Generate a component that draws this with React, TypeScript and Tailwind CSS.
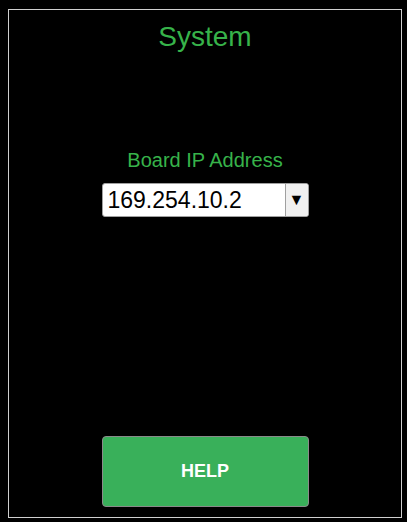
export default function App() {
  return (
    <div className="min-h-[522px] w-[407px] bg-black pt-[9px] pl-[8px]" style={{ fontFamily: '"Liberation Sans", Arial, sans-serif' }}>
      <div className="flex h-[509px] w-[394px] flex-col items-center border border-[#d0d0d0] pt-[11px]">
        <h1 className="text-[28px] leading-[32px] text-[#37b34a]">System</h1>

        <div className="mt-[96px] text-[20px] leading-[23px] text-[#37b34a]">Board IP Address</div>

        <div className="mt-[11px] flex h-[34px] w-[207px] items-stretch overflow-hidden rounded-[3px] border border-[#a0a0a0] bg-white">
          <div className="flex flex-1 items-center pl-[5px] text-[23px] text-black">169.254.10.2</div>
          <div className="flex w-[23px] items-center justify-center border-l border-[#a0a0a0] bg-[#f0f0f0] text-[16px] text-black">▼</div>
        </div>

        <button className="mt-[219px] h-[71px] w-[207px] rounded-[4px] border border-[#8a8a8a] bg-[#39b05a] text-[18px] font-bold text-white">
          HELP
        </button>
      </div>
    </div>
  );
}
